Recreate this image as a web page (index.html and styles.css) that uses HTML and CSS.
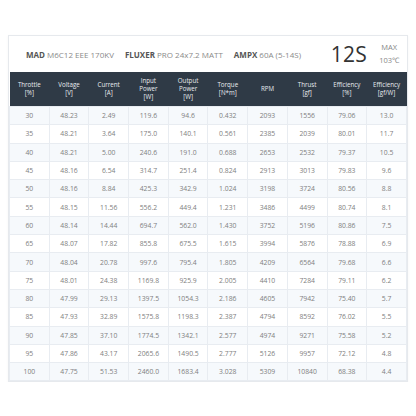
FILE: index.html
```html
<!DOCTYPE html>
<html>
<head>
    <meta charset="UTF-8">
    <title>MAD M6C12 Test Data</title>
    <link rel="stylesheet" href="styles.css">
</head>
<body>
    <div class="card">
        <div class="setup">
            <div class="parts">
                <span><b>MAD</b> M6C12 EEE 170KV</span>
                <span><b>FLUXER</b> PRO 24x7.2 MATT</span>
                <span><b>AMPX</b> 60A (5-14S)</span>
            </div>
            <div class="cells">12S</div>
            <div class="temp">MAX<br>103℃</div>
        </div>

        <table class="data">
            <thead>
                <tr>
                    <th>Throttle<br>[%]</th>
                    <th>Voltage<br>[V]</th>
                    <th>Current<br>[A]</th>
                    <th>Input<br>Power<br>[W]</th>
                    <th>Output<br>Power<br>[W]</th>
                    <th>Torque<br>[N*m]</th>
                    <th>RPM</th>
                    <th>Thrust<br>[gf]</th>
                    <th>Efficiency<br>[%]</th>
                    <th>Efficiency<br>[gf/W]</th>
                </tr>
            </thead>
            <tbody>
                <tr><td>30</td><td>48.23</td><td>2.49</td><td>119.6</td><td>94.6</td><td>0.432</td><td>2093</td><td>1556</td><td>79.06</td><td>13.0</td></tr>
                <tr><td>35</td><td>48.21</td><td>3.64</td><td>175.0</td><td>140.1</td><td>0.561</td><td>2385</td><td>2039</td><td>80.01</td><td>11.7</td></tr>
                <tr><td>40</td><td>48.21</td><td>5.00</td><td>240.6</td><td>191.0</td><td>0.688</td><td>2653</td><td>2532</td><td>79.37</td><td>10.5</td></tr>
                <tr><td>45</td><td>48.16</td><td>6.54</td><td>314.7</td><td>251.4</td><td>0.824</td><td>2913</td><td>3013</td><td>79.83</td><td>9.6</td></tr>
                <tr><td>50</td><td>48.16</td><td>8.84</td><td>425.3</td><td>342.9</td><td>1.024</td><td>3198</td><td>3724</td><td>80.56</td><td>8.8</td></tr>
                <tr><td>55</td><td>48.15</td><td>11.56</td><td>556.2</td><td>449.4</td><td>1.231</td><td>3486</td><td>4499</td><td>80.74</td><td>8.1</td></tr>
                <tr><td>60</td><td>48.14</td><td>14.44</td><td>694.7</td><td>562.0</td><td>1.430</td><td>3752</td><td>5196</td><td>80.86</td><td>7.5</td></tr>
                <tr><td>65</td><td>48.07</td><td>17.82</td><td>855.8</td><td>675.5</td><td>1.615</td><td>3994</td><td>5876</td><td>78.88</td><td>6.9</td></tr>
                <tr><td>70</td><td>48.04</td><td>20.78</td><td>997.6</td><td>795.4</td><td>1.805</td><td>4209</td><td>6564</td><td>79.68</td><td>6.6</td></tr>
                <tr><td>75</td><td>48.01</td><td>24.38</td><td>1169.8</td><td>925.9</td><td>2.005</td><td>4410</td><td>7284</td><td>79.11</td><td>6.2</td></tr>
                <tr><td>80</td><td>47.99</td><td>29.13</td><td>1397.5</td><td>1054.3</td><td>2.186</td><td>4605</td><td>7942</td><td>75.40</td><td>5.7</td></tr>
                <tr><td>85</td><td>47.93</td><td>32.89</td><td>1575.8</td><td>1198.3</td><td>2.387</td><td>4794</td><td>8592</td><td>76.02</td><td>5.5</td></tr>
                <tr><td>90</td><td>47.85</td><td>37.10</td><td>1774.5</td><td>1342.1</td><td>2.577</td><td>4974</td><td>9271</td><td>75.58</td><td>5.2</td></tr>
                <tr><td>95</td><td>47.86</td><td>43.17</td><td>2065.6</td><td>1490.5</td><td>2.777</td><td>5126</td><td>9957</td><td>72.12</td><td>4.8</td></tr>
                <tr><td>100</td><td>47.75</td><td>51.53</td><td>2460.0</td><td>1683.4</td><td>3.028</td><td>5309</td><td>10840</td><td>68.38</td><td>4.4</td></tr>
            </tbody>
        </table>
    </div>
</body>
</html>
```

FILE: styles.css
```css
body {
    font-family: 'Open Sans', 'Liberation Sans', sans-serif;
    margin: 0;
    padding: 35px 8px 0 8px;
    background-color: #fff;
    color: #777;
}

.card {
    width: 400px;
    border: 1px solid #e6e9ed;
    box-sizing: border-box;
    box-shadow: 0 1px 3px rgba(0, 0, 0, 0.04);
}

.setup {
    display: flex;
    align-items: center;
    height: 36px;
    padding: 0 8px 0 17px;
}

.parts {
    flex: 1;
    display: flex;
    gap: 11px;
    font-size: 8px;
    color: #8a8a8a;
}

.parts b {
    color: #555;
    font-weight: 700;
}

.cells {
    font-size: 21px;
    color: #333;
    margin-right: 12px;
    letter-spacing: 0.3px;
}

.temp {
    font-size: 7.5px;
    line-height: 13px;
    color: #888;
    text-align: center;
}

.data {
    width: 100%;
    border-collapse: collapse;
    table-layout: fixed;
}

.data th {
    background-color: #2f3a46;
    color: #e8ecf0;
    font-weight: 400;
    font-size: 6.2px;
    line-height: 8px;
    height: 34px;
    padding: 0;
    text-align: center;
    vertical-align: middle;
}

.data td {
    font-size: 6.8px;
    height: 17.3px;
    padding: 0;
    text-align: center;
    border: 1px solid #e8ecf1;
    color: #808080;
}

.data tbody tr:nth-child(odd) {
    background-color: #f6f9fc;
}
```
